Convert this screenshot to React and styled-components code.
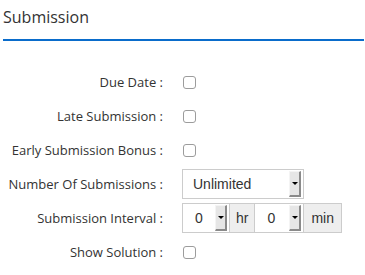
import React from "react";
import styled, { createGlobalStyle } from "styled-components";

const Global = createGlobalStyle`
  html, body { margin: 0; padding: 0; background: #fff; }
  body { font-family: "Open Sans", sans-serif; color: #333; }
`;

const Page = styled.div`
  padding: 0 1px 0 3px;
`;

const Header = styled.h3`
  margin: 0;
  padding-top: 6px;
  height: 41px;
  box-sizing: border-box;
  font-family: "Open Sans", sans-serif;
  font-weight: 400;
  font-size: 16px;
  line-height: 22px;
  color: #333;
  border-bottom: 2px solid #0a6ccb;
`;

const Form = styled.div`
  display: grid;
  grid-template-columns: 160px auto;
  column-gap: 19px;
  grid-auto-rows: 34px;
  align-items: center;
  padding-top: 24px;
`;

const Label = styled.div`
  text-align: right;
  font-size: 13px;
  color: #333;
  white-space: nowrap;
`;

const Check = styled.span`
  display: block;
  width: 11px;
  height: 11px;
  margin-left: 1px;
  border: 1px solid #9c9c9c;
  border-radius: 3px;
  background: #fff;
`;

const SelectBox = styled.div`
  display: flex;
  align-items: center;
  box-sizing: border-box;
  width: ${(p) => p.$w}px;
  height: 30px;
  border: 1px solid #ccc;
  background: #fff;
  padding: 1px 2px 1px 0;
  font-family: "Liberation Sans", Arial, sans-serif;
  font-size: 14px;
  color: #333;
`;

const SelText = styled.span`
  flex: 1;
  padding-left: ${(p) => p.$pl}px;
`;

const ArrowBtn = styled.span`
  display: flex;
  align-items: center;
  justify-content: center;
  box-sizing: border-box;
  width: 12px;
  height: 100%;
  background: #e6e6e6;
  border-top: 1px solid #f4f4f4;
  border-left: 1px solid #f4f4f4;
  border-right: 2px solid #8a8a8a;
  border-bottom: 2px solid #8a8a8a;
`;

const Tri = styled.span`
  width: 0;
  height: 0;
  border-left: 3px solid transparent;
  border-right: 3px solid transparent;
  border-top: 3px solid #000;
`;

const Group = styled.div`
  display: flex;
  height: 30px;
`;

const Addon = styled.span`
  display: flex;
  align-items: center;
  box-sizing: border-box;
  height: 30px;
  padding: 0 ${(p) => p.$px}px;
  background: #eee;
  border: 1px solid #ccc;
  border-left: none;
  font-family: "Liberation Sans", Arial, sans-serif;
  font-size: 14px;
  color: #333;
`;

const GroupSelect = styled(SelectBox)`
  border-left: ${(p) => (p.$first ? "1px solid #ccc" : "none")};
`;

function Select({ value, w, pl, first = true, as }) {
  const C = as || SelectBox;
  return (
    <C $w={w} $first={first}>
      <SelText $pl={pl}>{value}</SelText>
      <ArrowBtn>
        <Tri />
      </ArrowBtn>
    </C>
  );
}

export default function App() {
  return (
    <Page>
      <Global />
      <Header>Submission</Header>
      <Form>
        <Label>Due Date :</Label>
        <Check />
        <Label>Late Submission :</Label>
        <Check />
        <Label>Early Submission Bonus :</Label>
        <Check />
        <Label>Number Of Submissions :</Label>
        <Select value="Unlimited" w={122} pl={10} />
        <Label>Submission Interval :</Label>
        <Group>
          <Select as={GroupSelect} value="0" w={48} pl={12} first />
          <Addon $px={6}>hr</Addon>
          <Select as={GroupSelect} value="0" w={49} pl={12} first={false} />
          <Addon $px={7}>min</Addon>
        </Group>
        <Label>Show Solution :</Label>
        <Check />
      </Form>
    </Page>
  );
}
